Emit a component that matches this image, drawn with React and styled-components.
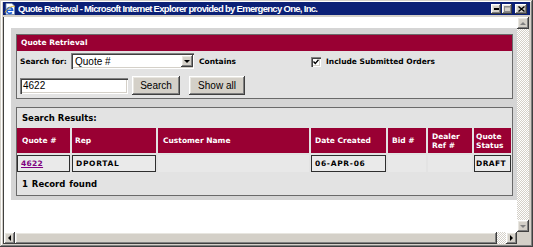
import React from 'react';
import styled, { createGlobalStyle, css } from 'styled-components';

const GlobalStyle = createGlobalStyle`
  html, body { margin: 0; padding: 0; background: #d4d0c8; }
  body { width: 533px; height: 247px; overflow: hidden; }
  *, *::before, *::after { box-sizing: border-box; }
`;

const raised = css`
  background: #d4d0c8;
  box-shadow: inset -1px -1px #404040, inset 1px 1px #ffffff, inset -2px -2px #808080, inset 2px 2px #e8e6e0;
`;

const sunken = css`
  background: #ffffff;
  box-shadow: inset 1px 1px #808080, inset 2px 2px #404040, inset -1px -1px #ffffff, inset -2px -2px #d4d0c8;
`;

const Window = styled.div`
  width: 533px;
  height: 247px;
  background: #d4d0c8;
  padding: 2px 3px 3px 3px;
  display: flex;
  flex-direction: column;
  box-shadow: inset -1px -1px #404040, inset 1px 1px #d4d0c8, inset -2px -2px #808080, inset 2px 2px #ffffff;
`;

const TitleBar = styled.div`
  height: 13px;
  background: #0b2076;
  display: flex;
  align-items: center;
  padding: 0 3px 0 1px;
`;

const TitleText = styled.div`
  flex: 1;
  margin-left: 2px;
  color: #ffffff;
  font: bold 9.5px/13px "Liberation Sans", Arial, sans-serif;
  letter-spacing: -0.7px;
  white-space: nowrap;
  overflow: hidden;
`;

const CaptionButton = styled.div`
  ${raised};
  width: ${p => p.$w}px;
  height: 10px;
  margin-left: ${p => p.$gap}px;
  display: flex;
  align-items: center;
  justify-content: center;
`;

const Client = styled.div`
  margin-top: 2px;
  flex: 1;
  display: grid;
  grid-template-columns: 513px 12px;
  grid-template-rows: 215px 12px;
  border-left: 1px solid #404040;
`;

const Viewport = styled.div`
  background: #ffffff;
  overflow: hidden;
  padding: 11px 0 0 7px;
`;

const Panel = styled.div`
  width: 506px;
  background: #d5d5d5;
  padding: 6px 4px 4px 5px;
  display: flex;
  flex-direction: column;
  gap: 8px;
`;

const Box = styled.div`
  border: 1px solid #6a6a6a;
  background: #e3e3e3;
  height: ${p => p.$h}px;
  display: flex;
  flex-direction: column;
`;

const BoxHeader = styled.div`
  height: 16px;
  background: #990033;
  color: #ffffff;
  font: bold 7.5px/16px "DejaVu Sans", Verdana, sans-serif;
  padding-left: 4px;
`;

const BoxBody = styled.div`
  padding: 2px 0 3px 3px;
  display: flex;
  flex-direction: column;
  gap: 7px;
`;

const FormRow = styled.div`
  height: ${p => p.$h}px;
  display: flex;
  align-items: center;
`;

const Label = styled.span`
  font: bold 7.5px "DejaVu Sans", Verdana, sans-serif;
  color: #000000;
  width: ${p => (p.$w ? `${p.$w}px` : 'auto')};
  margin-left: ${p => p.$ml || 0}px;
  white-space: nowrap;
`;

const Select = styled.div`
  ${sunken};
  width: 123px;
  height: 16px;
  display: flex;
  align-items: center;
  justify-content: space-between;
  padding: 2px 1px 2px 4px;
  font: 10px "Liberation Sans", Arial, sans-serif;
  color: #000000;
`;

const DropButton = styled.div`
  ${raised};
  width: 12px;
  height: 12px;
  display: flex;
  align-items: center;
  justify-content: center;
`;

const CheckBox = styled.div`
  ${sunken};
  width: 10px;
  height: 10px;
  margin-top: 2px;
  margin-right: 5px;
  display: flex;
  align-items: center;
  justify-content: center;
`;

const TextInput = styled.div`
  ${sunken};
  width: 108px;
  height: 16px;
  padding: 0 3px;
  display: flex;
  align-items: center;
  font: 10px "Liberation Sans", Arial, sans-serif;
  color: #000000;
`;

const Button = styled.div`
  ${raised};
  width: ${p => p.$w}px;
  height: 19px;
  margin-left: ${p => p.$ml}px;
  display: flex;
  align-items: center;
  justify-content: center;
  font: 10px "Liberation Sans", Arial, sans-serif;
  color: #000000;
`;

const ResultsLabel = styled.div`
  height: 20px;
  padding-left: 5px;
  display: flex;
  align-items: center;
  font: bold 8.5px "DejaVu Sans", Verdana, sans-serif;
  color: #000000;
`;

const Grid = styled.div`
  display: grid;
  grid-template-columns: 53px 84px 151px 75px 38px 44px 37px;
  grid-template-rows: 25px 17px;
  gap: 2px;
  margin-right: 1px;
`;

const HeadCell = styled.div`
  background: #990033;
  color: #ffffff;
  font: bold 7.5px/9px "DejaVu Sans", Verdana, sans-serif;
  padding: 0 ${p => p.$pad ?? 4}px;
  display: flex;
  align-items: center;
`;

const DataCell = styled.div`
  background: ${p => (p.$filled ? '#eaeaea' : '#e8e8e8')};
  border: ${p => (p.$filled ? '1px solid #2e2e2e' : 'none')};
  font: bold 7.5px "DejaVu Sans", Verdana, sans-serif;
  letter-spacing: ${p => p.$ls ?? 0.7}px;
  color: #000000;
  padding-left: ${p => p.$pad ?? 3}px;
  display: flex;
  align-items: center;
  white-space: nowrap;
  overflow: hidden;
`;

const QuoteLink = styled.a`
  color: #800080;
  text-decoration: underline;
  letter-spacing: 0.3px;
`;

const Footer = styled.div`
  flex: 1;
  padding-left: 5px;
  display: flex;
  align-items: center;
  font: bold 8.5px "DejaVu Sans", Verdana, sans-serif;
  color: #000000;
  word-spacing: 1px;
`;

const VScroll = styled.div`
  display: flex;
  flex-direction: column;
`;

const HScroll = styled.div`
  display: flex;
`;

const Track = styled.div`
  flex: 1;
  background: repeating-conic-gradient(#d4d0c8 0 25%, #ffffff 0 50%) 0 0 / 2px 2px;
`;

const ArrowButton = styled.div`
  ${raised};
  width: ${p => p.$w}px;
  height: ${p => p.$h}px;
  flex: none;
  display: flex;
  align-items: center;
  justify-content: center;
`;

const Thumb = styled.div`
  ${raised};
  width: ${p => p.$w}px;
  flex: none;
`;

const Corner = styled.div`
  background: #d4d0c8;
`;

const Tri = ({ dir, color = '#000' }) => {
  const pts = {
    up: '0,3 3,0 6,3',
    down: '0,0 6,0 3,3',
    left: '3,0 3,6 0,3',
    right: '0,0 0,6 3,3',
  }[dir];
  const w = dir === 'up' || dir === 'down' ? 6 : 3;
  const h = dir === 'up' || dir === 'down' ? 3 : 6;
  return (
    <svg width={w} height={h} viewBox={`0 0 ${w} ${h}`}>
      <polygon points={pts} fill={color} />
    </svg>
  );
};

const IEIcon = () => (
  <svg width="12" height="12" viewBox="0 0 12 12">
    <path d="M2 0.5h6l2.5 2.5v8.5h-8.5z" fill="#ffffff" stroke="#7a8fb0" strokeWidth="0.8" />
    <path d="M3 7.2h5.6a2.9 2.9 0 1 0 -0.7 2.2" fill="none" stroke="#1d5fd6" strokeWidth="1.6" />
    <path d="M1 9.5c2-4 7-7 10-6" fill="none" stroke="#e8b820" strokeWidth="0.9" />
  </svg>
);

const columns = [
  { label: 'Quote #', pad: 5 },
  { label: 'Rep', pad: 3 },
  { label: 'Customer Name', pad: 5 },
  { label: 'Date Created', pad: 4 },
  { label: 'Bid #', pad: 4 },
  { label: ['Dealer', 'Ref #'], pad: 4 },
  { label: ['Quote', 'Status'], pad: 2 },
];

export default function App() {
  return (
    <>
      <GlobalStyle />
      <Window>
        <TitleBar>
          <IEIcon />
          <TitleText>Quote Retrieval - Microsoft Internet Explorer provided by Emergency One, Inc.</TitleText>
          <CaptionButton $w={10} $gap={0}>
            <svg width="5" height="2" viewBox="0 0 5 2"><rect width="5" height="2" fill="#000" /></svg>
          </CaptionButton>
          <CaptionButton $w={10} $gap={1}>
            <svg width="7" height="6" viewBox="0 0 7 6">
              <rect x="0.5" y="0.5" width="6" height="5" fill="none" stroke="#8a8a8a" />
              <rect x="0" y="0" width="7" height="1.5" fill="#8a8a8a" />
            </svg>
          </CaptionButton>
          <CaptionButton $w={12} $gap={3}>
            <svg width="7" height="6" viewBox="0 0 7 6">
              <path d="M0.5 0.5L6.5 5.5M6.5 0.5L0.5 5.5" stroke="#000" strokeWidth="1.4" />
            </svg>
          </CaptionButton>
        </TitleBar>

        <Client>
          <Viewport>
            <Panel>
              <Box $h={65}>
                <BoxHeader>Quote Retrieval</BoxHeader>
                <BoxBody>
                  <FormRow $h={16}>
                    <Label $w={51}>Search for:</Label>
                    <Select>
                      <span>Quote #</span>
                      <DropButton><Tri dir="down" /></DropButton>
                    </Select>
                    <Label $w={112} $ml={5}>Contains</Label>
                    <CheckBox>
                      <svg width="6" height="6" viewBox="0 0 6 6">
                        <path d="M0.5 2.5L2.3 4.5L5.5 0.8" fill="none" stroke="#000" strokeWidth="1.3" />
                      </svg>
                    </CheckBox>
                    <Label>Include Submitted Orders</Label>
                  </FormRow>
                  <FormRow $h={19}>
                    <TextInput>4622</TextInput>
                    <Button $w={48} $ml={4}>Search</Button>
                    <Button $w={56} $ml={9}>Show all</Button>
                  </FormRow>
                </BoxBody>
              </Box>

              <Box $h={89}>
                <ResultsLabel>Search Results:</ResultsLabel>
                <Grid>
                  {columns.map((c, i) => (
                    <HeadCell key={i} $pad={c.pad}>
                      {Array.isArray(c.label) ? (
                        <span>{c.label[0]}<br />{c.label[1]}</span>
                      ) : (
                        c.label
                      )}
                    </HeadCell>
                  ))}
                  <DataCell $filled><QuoteLink href="#">4622</QuoteLink></DataCell>
                  <DataCell $filled>DPORTAL</DataCell>
                  <DataCell />
                  <DataCell $filled>06-APR-06</DataCell>
                  <DataCell />
                  <DataCell />
                  <DataCell $filled $ls={0.4} $pad={1}>DRAFT</DataCell>
                </Grid>
                <Footer>1 Record found</Footer>
              </Box>
            </Panel>
          </Viewport>

          <VScroll>
            <ArrowButton $w={12} $h={12}><Tri dir="up" color="#808080" /></ArrowButton>
            <Track />
            <ArrowButton $w={12} $h={12}><Tri dir="down" color="#808080" /></ArrowButton>
          </VScroll>

          <HScroll>
            <ArrowButton $w={11} $h={12}><Tri dir="left" /></ArrowButton>
            <Thumb $w={482} />
            <Track />
            <ArrowButton $w={11} $h={12}><Tri dir="right" /></ArrowButton>
          </HScroll>

          <Corner />
        </Client>
      </Window>
    </>
  );
}
